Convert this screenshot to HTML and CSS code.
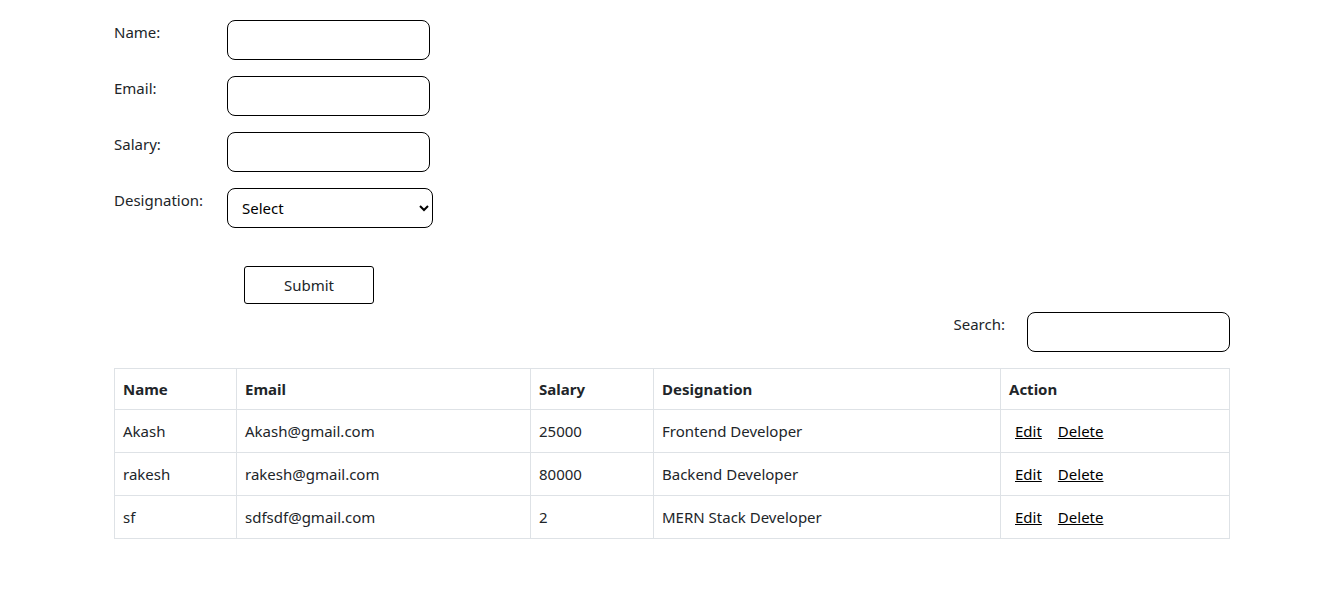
FILE: index.html
```html
<!DOCTYPE html>
<html>
<head>
<meta charset="utf-8">
<link rel="stylesheet" href="styles.css">
</head>
<body>
<div class="page">
  <form class="emp-form">
    <div class="field">
      <label class="field-label">Name:</label>
      <input class="field-input" type="text">
    </div>
    <div class="field">
      <label class="field-label">Email:</label>
      <input class="field-input" type="text">
    </div>
    <div class="field">
      <label class="field-label">Salary:</label>
      <input class="field-input" type="text">
    </div>
    <div class="field">
      <label class="field-label">Designation:</label>
      <select class="field-select"><option>Select</option></select>
    </div>
    <div class="submit-row">
      <button type="button" class="submit-btn">Submit</button>
    </div>
  </form>
  <div class="search-row">
    <label class="search-label">Search:</label>
    <input class="field-input" type="text">
  </div>
  <table class="emp-table">
    <colgroup>
      <col class="c1"><col class="c2"><col class="c3"><col class="c4"><col class="c5">
    </colgroup>
    <thead>
      <tr><th>Name</th><th>Email</th><th>Salary</th><th>Designation</th><th>Action</th></tr>
    </thead>
    <tbody>
      <tr><td>Akash</td><td>Akash@gmail.com</td><td>25000</td><td>Frontend Developer</td><td class="actions"><a href="#">Edit</a><a href="#">Delete</a></td></tr>
      <tr><td>rakesh</td><td>rakesh@gmail.com</td><td>80000</td><td>Backend Developer</td><td class="actions"><a href="#">Edit</a><a href="#">Delete</a></td></tr>
      <tr><td>sf</td><td>sdfsdf@gmail.com</td><td>2</td><td>MERN Stack Developer</td><td class="actions"><a href="#">Edit</a><a href="#">Delete</a></td></tr>
    </tbody>
  </table>
</div>
</body>
</html>
```
FILE: styles.css
```css
* { box-sizing: border-box; }
body {
  margin: 0;
  background: #fff;
  color: #212529;
  font-family: "Noto Sans", "Open Sans", sans-serif;
  font-size: 15px;
}
.page {
  margin-left: 114px;
  width: 1116px;
  padding-top: 20px;
}
.field {
  display: flex;
  align-items: flex-start;
  margin-bottom: 16px;
}
.field-label {
  width: 113px;
  line-height: 24px;
  font-size: 15px;
}
.field-input {
  width: 203px;
  height: 40px;
  border: 1px solid #000;
  border-radius: 8px;
  padding: 0 12px;
  font: inherit;
  background: #fff;
}
.field-select {
  width: 206px;
  height: 40px;
  border: 1px solid #000;
  border-radius: 8px;
  padding: 0 10px;
  font-family: inherit;
  font-size: 15px;
  color: #000;
  background: #fff;
}
.submit-row {
  padding-top: 22px;
  padding-left: 130px;
}
.submit-btn {
  width: 130px;
  height: 38px;
  border: 1px solid #000;
  border-radius: 3px;
  background: #fff;
  font-family: inherit;
  font-size: 15px;
  color: #212529;
}
.search-row {
  display: flex;
  justify-content: flex-end;
  align-items: flex-start;
  margin-top: 8px;
}
.search-label {
  line-height: 24px;
  margin-right: 22px;
  font-size: 15px;
}
.emp-table {
  margin-top: 16px;
  width: 1115px;
  border-collapse: collapse;
  table-layout: fixed;
  font-size: 15px;
}
.c1 { width: 122px; }
.c2 { width: 294px; }
.c3 { width: 123px; }
.c4 { width: 347px; }
.c5 { width: 229px; }
.emp-table th, .emp-table td {
  border: 1px solid #dee2e6;
  padding: 8px 8px;
  text-align: left;
  line-height: 24px;
  vertical-align: middle;
}
.emp-table th {
  font-weight: 700;
  height: 41px;
  padding-top: 7px;
  padding-bottom: 7px;
}
.emp-table td {
  height: 43px;
}
.actions a {
  color: #000;
  text-decoration: underline;
  margin-left: 6px;
  margin-right: 10px;
}
```
